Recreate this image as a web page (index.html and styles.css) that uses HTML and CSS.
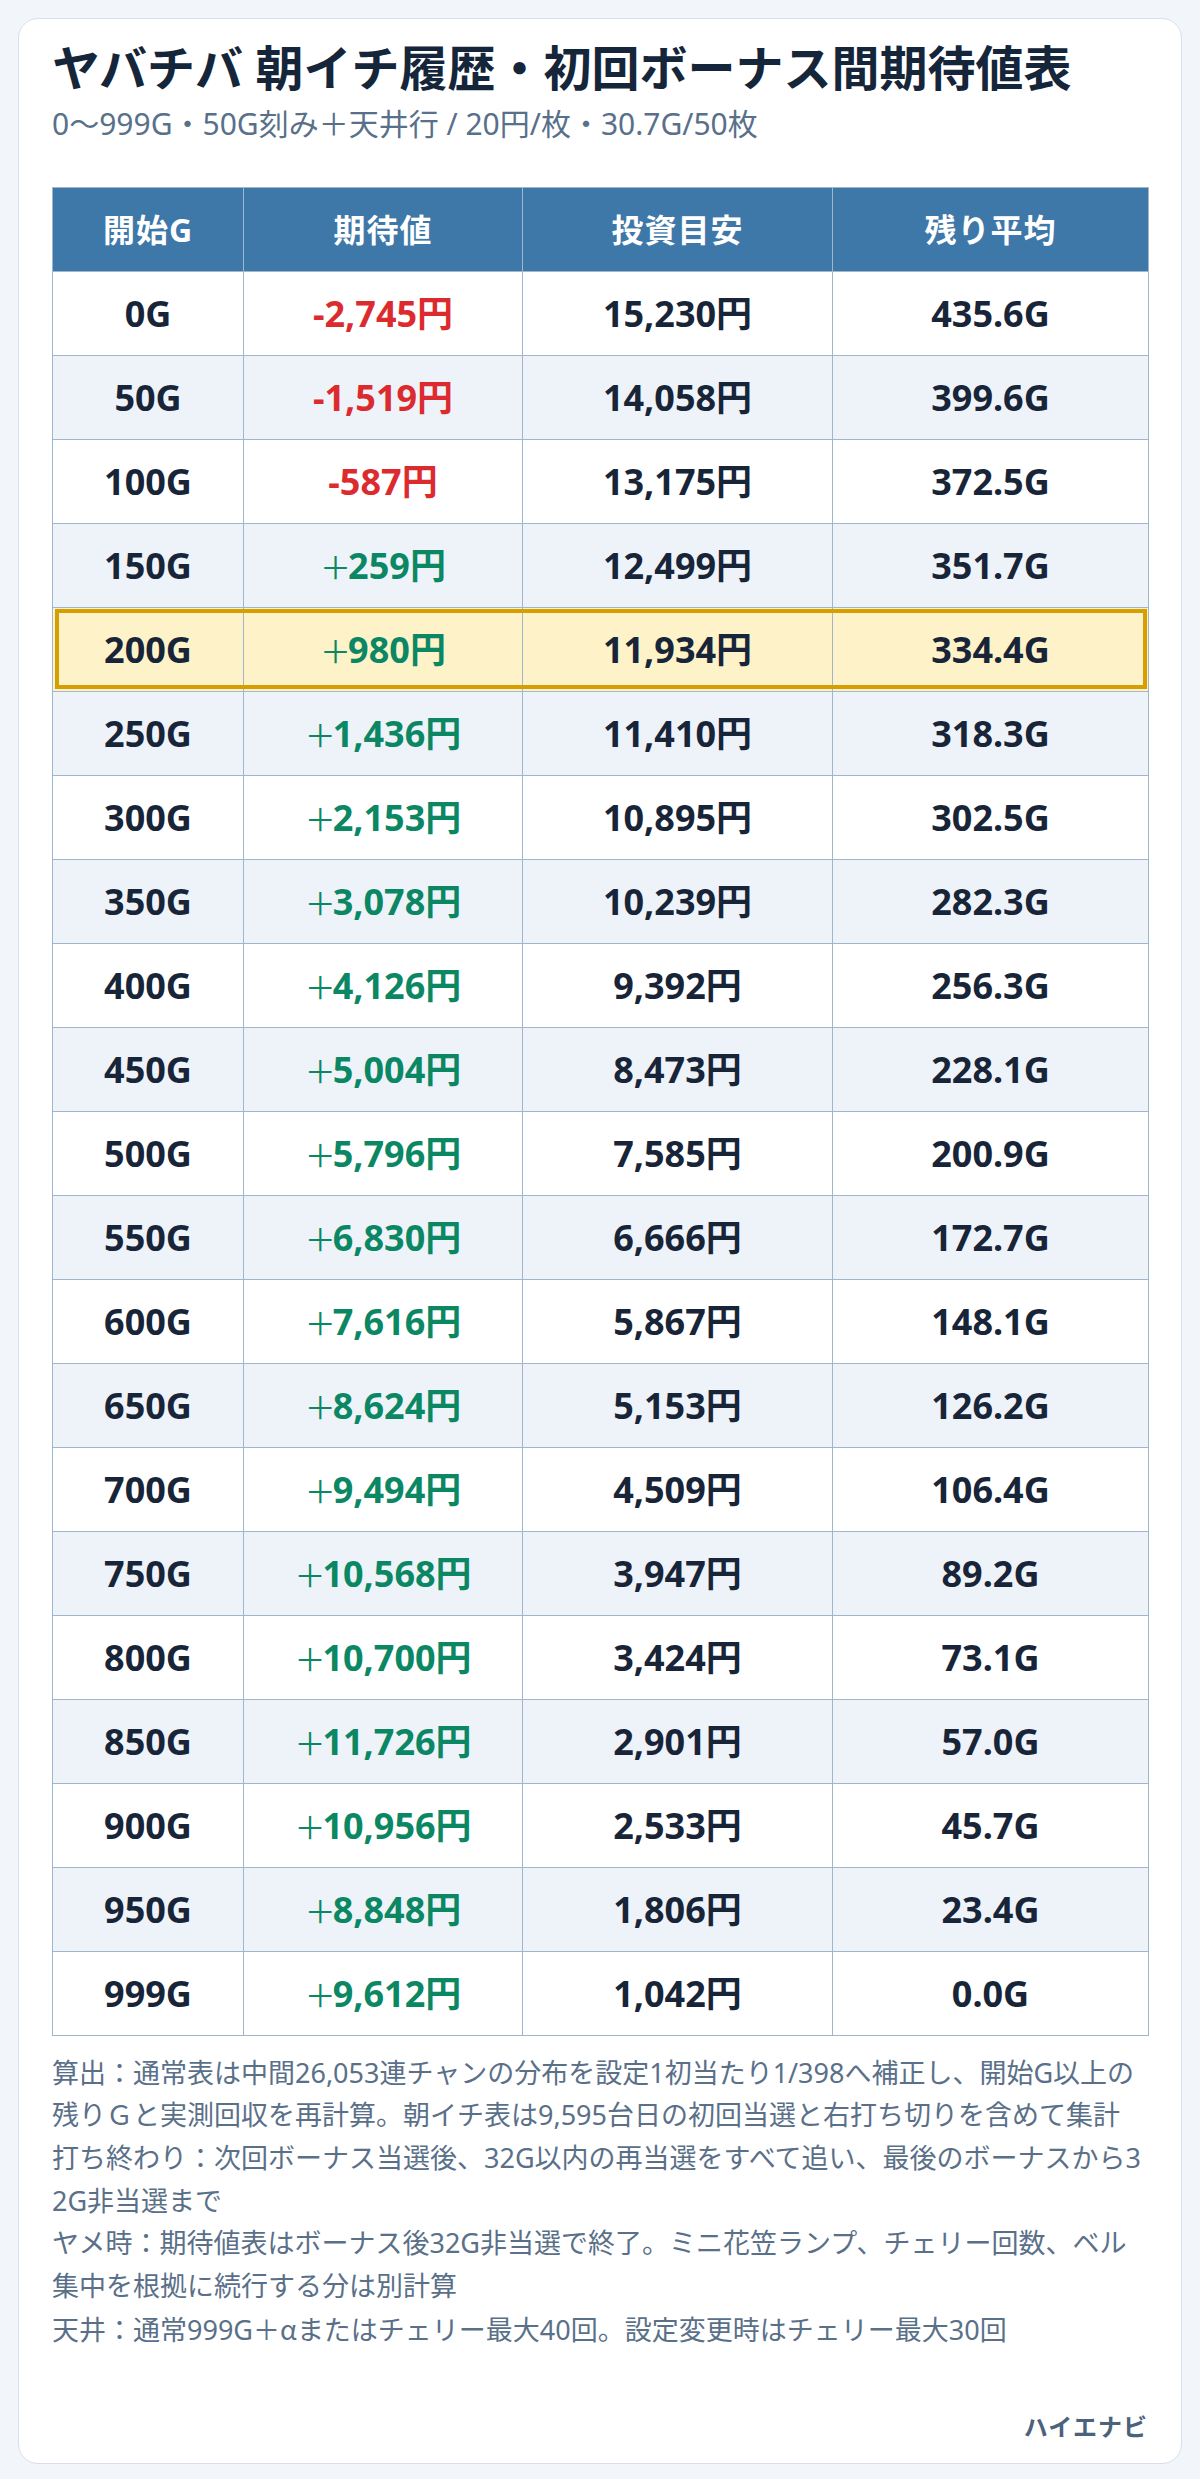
FILE: index.html
```html
<!DOCTYPE html>
<html lang="ja">
<head>
<meta charset="utf-8">
<title>ヤバチバ 朝イチ履歴・初回ボーナス間期待値表</title>
<link rel="stylesheet" href="styles.css">
</head>
<body>
<div class="card">
  <h1 class="title">ヤバチバ 朝イチ履歴・初回ボーナス間期待値表</h1>
  <p class="subtitle">0〜999G・50G刻み＋天井行 / 20円/枚・30.7G/50枚</p>
  <table class="ev-table">
    <colgroup>
      <col class="c1"><col class="c2"><col class="c3"><col class="c4">
    </colgroup>
    <thead>
      <tr><th>開始G</th><th>期待値</th><th>投資目安</th><th>残り平均</th></tr>
    </thead>
    <tbody>
      <tr><td>0G</td><td class="neg">-2,745円</td><td>15,230円</td><td>435.6G</td></tr>
      <tr><td>50G</td><td class="neg">-1,519円</td><td>14,058円</td><td>399.6G</td></tr>
      <tr><td>100G</td><td class="neg">-587円</td><td>13,175円</td><td>372.5G</td></tr>
      <tr><td>150G</td><td class="pos"><span class="sign">＋</span>259円</td><td>12,499円</td><td>351.7G</td></tr>
      <tr class="hl"><td>200G</td><td class="pos"><span class="sign">＋</span>980円</td><td>11,934円</td><td>334.4G</td></tr>
      <tr><td>250G</td><td class="pos"><span class="sign">＋</span>1,436円</td><td>11,410円</td><td>318.3G</td></tr>
      <tr><td>300G</td><td class="pos"><span class="sign">＋</span>2,153円</td><td>10,895円</td><td>302.5G</td></tr>
      <tr><td>350G</td><td class="pos"><span class="sign">＋</span>3,078円</td><td>10,239円</td><td>282.3G</td></tr>
      <tr><td>400G</td><td class="pos"><span class="sign">＋</span>4,126円</td><td>9,392円</td><td>256.3G</td></tr>
      <tr><td>450G</td><td class="pos"><span class="sign">＋</span>5,004円</td><td>8,473円</td><td>228.1G</td></tr>
      <tr><td>500G</td><td class="pos"><span class="sign">＋</span>5,796円</td><td>7,585円</td><td>200.9G</td></tr>
      <tr><td>550G</td><td class="pos"><span class="sign">＋</span>6,830円</td><td>6,666円</td><td>172.7G</td></tr>
      <tr><td>600G</td><td class="pos"><span class="sign">＋</span>7,616円</td><td>5,867円</td><td>148.1G</td></tr>
      <tr><td>650G</td><td class="pos"><span class="sign">＋</span>8,624円</td><td>5,153円</td><td>126.2G</td></tr>
      <tr><td>700G</td><td class="pos"><span class="sign">＋</span>9,494円</td><td>4,509円</td><td>106.4G</td></tr>
      <tr><td>750G</td><td class="pos"><span class="sign">＋</span>10,568円</td><td>3,947円</td><td>89.2G</td></tr>
      <tr><td>800G</td><td class="pos"><span class="sign">＋</span>10,700円</td><td>3,424円</td><td>73.1G</td></tr>
      <tr><td>850G</td><td class="pos"><span class="sign">＋</span>11,726円</td><td>2,901円</td><td>57.0G</td></tr>
      <tr><td>900G</td><td class="pos"><span class="sign">＋</span>10,956円</td><td>2,533円</td><td>45.7G</td></tr>
      <tr><td>950G</td><td class="pos"><span class="sign">＋</span>8,848円</td><td>1,806円</td><td>23.4G</td></tr>
      <tr><td>999G</td><td class="pos"><span class="sign">＋</span>9,612円</td><td>1,042円</td><td>0.0G</td></tr>
    </tbody>
  </table>
  <div class="notes">
    <p>算出：通常表は中間26,053連チャンの分布を設定1初当たり1/398へ補正し、開始G以上の残りＧと実測回収を再計算。朝イチ表は9,595台日の初回当選と右打ち切りを含めて集計</p>
    <p>打ち終わり：次回ボーナス当選後、32G以内の再当選をすべて追い、最後のボーナスから32G非当選まで</p>
    <p>ヤメ時：期待値表はボーナス後32G非当選で終了。ミニ花笠ランプ、チェリー回数、ベル集中を根拠に続行する分は別計算</p>
    <p>天井：通常999G＋<span class="cjk">α</span>またはチェリー最大40回。設定変更時はチェリー最大30回</p>
  </div>
  <div class="brand">ハイエナビ</div>
</div>
</body>
</html>
```

FILE: styles.css
```css
* { box-sizing: border-box; }

html, body {
  margin: 0;
  background: #f2f5f9;
}

body {
  padding: 18px;
  font-family: "Noto Sans", "Noto Sans CJK JP", sans-serif;
  color: #172638;
}

.card {
  background: #ffffff;
  border: 1px solid #d7e0ea;
  border-radius: 20px;
  padding: 20px 33px 18px;
}

.title {
  margin: 0;
  font-size: 48px;
  line-height: 1.2;
  font-weight: 700;
  color: #15263a;
}

.subtitle {
  margin: 6px 0 0;
  font-size: 30px;
  line-height: 1.4;
  color: #58708a;
}

.ev-table {
  margin-top: 42px;
  width: 100%;
  border-collapse: collapse;
  table-layout: fixed;
}

.c1 { width: 191px; }
.c2 { width: 279px; }
.c3 { width: 310px; }
.c4 { width: 316px; }

.ev-table th,
.ev-table td {
  border: 1px solid #9fb6cd;
  text-align: center;
  padding: 18px 6px;
  line-height: 47px;
  white-space: nowrap;
}

.ev-table th {
  background: #3e78a9;
  color: #ffffff;
  font-size: 32px;
  font-weight: 700;
  letter-spacing: 1px;
}

.ev-table td {
  font-size: 36px;
  font-weight: 700;
  color: #182538;
}

.ev-table tbody tr:nth-child(even) td {
  background: #eef3fa;
}

.ev-table tr.hl td {
  background: #fef2c9;
}

.ev-table tr.hl {
  outline: 4px solid #d69e00;
  outline-offset: -6px;
}

.ev-table td.neg { color: #dc2b2f; }
.ev-table td.pos { color: #0b8764; }

.sign {
  font-family: "Noto Sans CJK JP", sans-serif;
  font-weight: 400;
  font-size: 31px;
  margin-right: -3px;
}

.cjk {
  font-family: "Noto Sans CJK JP", sans-serif;
}

.notes {
  margin-top: 16px;
  font-size: 27px;
  line-height: 1.58;
  color: #5a7089;
  word-break: break-all;
}

.notes p {
  margin: 0;
}

.brand {
  margin-top: 58px;
  text-align: right;
  font-size: 24px;
  line-height: 1.5;
  font-weight: 700;
  letter-spacing: 1px;
  color: #4b627c;
}
```
